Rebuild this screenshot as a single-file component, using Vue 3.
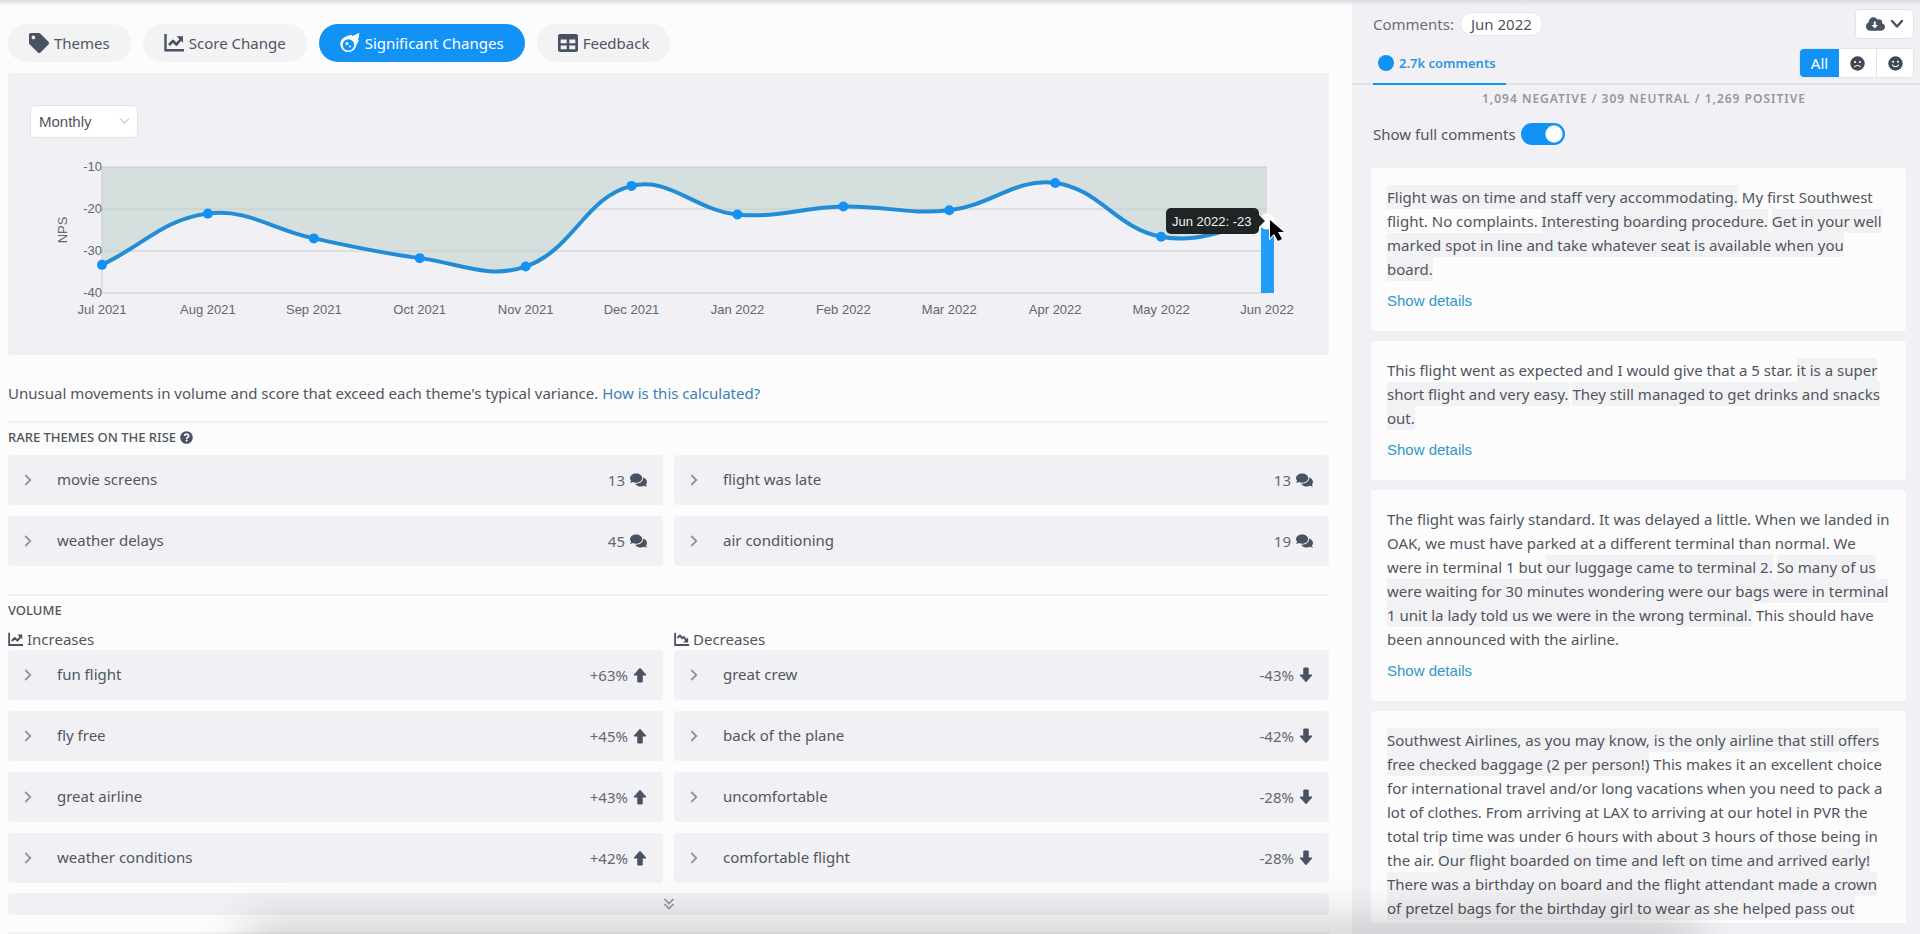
<script setup>
import { h, ref } from 'vue'

const glyphs = {
  tag: ['0 0 512 512', '<path fill="currentColor" d="M0 252V48C0 21 21 0 48 0h204a48 48 0 0 1 34 14l212 212c19 19 19 49 0 68L294 498c-19 19-49 19-68 0L14 286A48 48 0 0 1 0 252zM112 64a48 48 0 1 0 0 96 48 48 0 0 0 0-96z"/>'],
  rise: ['0 0 20 20', '<path fill="none" stroke="currentColor" stroke-width="2.4" d="M1.5 1v16.3H20"/><path fill="none" stroke="currentColor" stroke-width="2.6" stroke-linejoin="round" d="M5 12l4-4 3.5 3.5L17 6"/><path fill="currentColor" d="M12.5 3.2H19v6.5z"/>'],
  fall: ['0 0 20 20', '<path fill="none" stroke="currentColor" stroke-width="2.4" d="M1.5 1v16.3H20"/><path fill="none" stroke="currentColor" stroke-width="2.4" stroke-linejoin="round" d="M4.5 8L8 4.5l3 4 2-2 3.5 5"/><path fill="currentColor" d="M18.8 7v7h-6.5z"/>'],
  meteor: ['0 0 20 20', '<path fill="currentColor" fill-rule="evenodd" d="M19.2 0c.1 2.500-.4 4.600-1.300 6.800l1 .4c-.7 2-1.600 3.700-2.700 5.200a8 8 0 1 1-13.300-7.200C5.800 3.400 9 2.500 11.800 1.800l.1 1.400C14.400 2.100 16.800 1 19.200 0zM8.400 6.200a5.700 5.700 0 1 0 0 11.400 5.700 5.700 0 0 0 0-11.400z"/><circle cx="7" cy="10.600" r="1.600" fill="currentColor"/><circle cx="10" cy="13.600" r="1" fill="currentColor"/>'],
  table: ['0 0 20 20', '<path fill="currentColor" fill-rule="evenodd" d="M2 1h16a2 2 0 0 1 2 2v14a2 2 0 0 1-2 2H2a2 2 0 0 1-2-2V3a2 2 0 0 1 2-2zm.7 5.500v3.700h6V6.500zm8.600 0v3.700h6V6.500zm-8.600 6v3.700h6v-3.700zm8.600 0v3.700h6v-3.700z"/>'],
  help: ['0 0 20 20', '<circle cx="10" cy="10" r="9.700" fill="currentColor"/><path fill="none" stroke="#fff" stroke-width="2.600" d="M6.700 7.700C7.200 5.600 8.500 4.900 10 4.900c2 0 3.300 1.100 3.300 2.600 0 2.300-3.100 2.300-3.100 4.700"/><circle cx="10.100" cy="14.800" r="1.600" fill="#fff"/>'],
  chats: ['0 0 576 512', '<path fill="currentColor" d="M416 192c0-88.400-93.100-160-208-160S0 103.600 0 192c0 34.300 14.100 65.900 38 92-13.400 30.200-35.500 54.200-35.800 54.500-2.200 2.300-2.800 5.700-1.500 8.700S4.800 352 8 352c36.600 0 66.900-12.300 88.700-25 32.200 15.700 70.300 25 111.300 25 114.900 0 208-71.600 208-160zm122 220c23.900-26 38-57.700 38-92 0-66.900-53.500-124.200-129.300-148.100.9 6.600 1.300 13.300 1.300 20.100 0 105.900-107.700 192-240 192-10.800 0-21.300-.8-31.700-1.900C207.800 439.600 281.800 480 368 480c41 0 79.100-9.200 111.300-25 21.800 12.700 52.100 25 88.700 25 3.200 0 6.100-1.900 7.300-4.800 1.300-2.900.7-6.300-1.500-8.700-.3-.3-22.400-24.200-35.800-54.500z"/>'],
  up: ['0 0 14 16', '<path fill="currentColor" stroke="currentColor" stroke-linejoin="round" d="M7 1.200l6 6.800H9.200v7H4.800V8H1z"/>'],
  down: ['0 0 14 16', '<path fill="currentColor" stroke="currentColor" stroke-linejoin="round" d="M7 14.800L13 8H9.200V1H4.800v7H1z"/>'],
  right: ['0 0 8 12', '<path fill="none" stroke="currentColor" stroke-width="1.800" d="M1.300 1l5 5-5 5"/>'],
  chevron: ['0 0 14 10', '<path fill="none" stroke="currentColor" stroke-width="2.400" stroke-linecap="round" stroke-linejoin="round" d="M2 2l5 5.500L12 2"/>'],
  thin: ['0 0 12 8', '<path fill="none" stroke="currentColor" stroke-width="1" d="M1 1l5 5.500L11 1"/>'],
  more: ['0 0 12 12', '<path fill="none" stroke="currentColor" stroke-width="1.700" d="M1.500 1L6 5.500 10.500 1M1.500 6L6 10.500 10.500 6"/>'],
  cloud: ['0 0 640 512', '<path fill="currentColor" d="M537.600 226.600c4.100-10.700 6.400-22.400 6.400-34.600 0-53-43-96-96-96-19.700 0-38.100 6-53.300 16.200C367 64.200 315.300 32 256 32c-88.400 0-160 71.600-160 160 0 2.700.1 5.400.2 8.100C40.200 219.800 0 273.200 0 336c0 79.500 64.500 144 144 144h368c70.700 0 128-57.300 128-128 0-61.900-44-113.600-102.400-125.400z"/><path fill="#fff" d="M264 170h64v120h76L296 410 188 290h76z"/>'],
  sad: ['0 0 16 16', '<circle cx="8" cy="8" r="7.700" fill="currentColor"/><circle cx="5.400" cy="6.400" r="1.100" fill="#fff"/><circle cx="10.600" cy="6.400" r="1.100" fill="#fff"/><path fill="none" stroke="#fff" stroke-width="1.100" stroke-linecap="round" d="M4.900 11.500c1.500-1.900 4.700-1.900 6.200 0"/>'],
  happy: ['0 0 16 16', '<circle cx="8" cy="8" r="7.700" fill="currentColor"/><circle cx="5.400" cy="6.200" r="1.100" fill="#fff"/><circle cx="10.600" cy="6.200" r="1.100" fill="#fff"/><path fill="none" stroke="#fff" stroke-width="1.100" stroke-linecap="round" d="M4.700 9.600c1.500 2.300 5.100 2.300 6.600 0"/>'],
}
const Icon = (props) =>
  h('svg', { viewBox: glyphs[props.name][0], innerHTML: glyphs[props.name][1], 'aria-hidden': 'true' })
Icon.props = ['name']

const tabs = [
  { label: 'Themes', icon: 'tag' },
  { label: 'Score Change', icon: 'rise' },
  { label: 'Significant Changes', icon: 'meteor' },
  { label: 'Feedback', icon: 'table' },
]
const activeTab = ref('Significant Changes')
const period = ref('Monthly')
const showFull = ref(true)

const months = ['Jul 2021', 'Aug 2021', 'Sep 2021', 'Oct 2021', 'Nov 2021', 'Dec 2021', 'Jan 2022', 'Feb 2022', 'Mar 2022', 'Apr 2022', 'May 2022', 'Jun 2022']
const scores = [-33.3, -21.1, -27, -31.7, -33.7, -14.5, -21.3, -19.4, -20.3, -13.8, -26.6, -23]
const plot = { left: 94, right: 1259, top: 16, bottom: 142 }
const xAt = (i) => plot.left + ((plot.right - plot.left) * i) / (months.length - 1)
const yAt = (v) => plot.top + ((-10 - v) / 30) * (plot.bottom - plot.top)
const points = scores.map((v, i) => ({ x: xAt(i), y: yAt(v), label: months[i] }))
const ticks = [-10, -20, -30, -40]

// Smooths the series with control points weighted by neighbour distance.
function spline(pts, tension) {
  const ctl = pts.map((c, i) => {
    const p = pts[i - 1] || c
    const n = pts[i + 1] || c
    const a = Math.hypot(c.x - p.x, c.y - p.y)
    const b = Math.hypot(n.x - c.x, n.y - c.y)
    const fa = (tension * a) / (a + b)
    const fb = (tension * b) / (a + b)
    return {
      before: [c.x - fa * (n.x - p.x), c.y - fa * (n.y - p.y)],
      after: [c.x + fb * (n.x - p.x), c.y + fb * (n.y - p.y)],
    }
  })
  return pts.slice(1).reduce(
    (d, c, i) => `${d} C${ctl[i].after} ${ctl[i + 1].before} ${c.x},${c.y}`,
    `M${pts[0].x},${pts[0].y}`,
  )
}
const line = spline(points, 0.4)
const area = `${line} V${plot.top} H${plot.left} Z`
const last = points[points.length - 1]

const rare = [
  { name: 'movie screens', value: '13' },
  { name: 'flight was late', value: '13' },
  { name: 'weather delays', value: '45' },
  { name: 'air conditioning', value: '19' },
]
const volume = [
  {
    title: 'Increases', icon: 'rise', arrow: 'up',
    rows: [['fun flight', '+63%'], ['fly free', '+45%'], ['great airline', '+43%'], ['weather conditions', '+42%']],
  },
  {
    title: 'Decreases', icon: 'fall', arrow: 'down',
    rows: [['great crew', '-43%'], ['back of the plane', '-42%'], ['uncomfortable', '-28%'], ['comfortable flight', '-28%']],
  },
]

const comments = [
  {
    details: true,
    parts: [
      ['Flight was on time and staff very accommodating.', true],
      ['My first Southwest flight. No complaints.', false],
      ['Interesting boarding procedure.', true],
      ['Get in your well marked spot in line and take whatever seat is available when you board.', true],
    ],
  },
  {
    details: true,
    parts: [
      ['This flight went as expected and I would give that a 5 star.', false],
      ['it is a super short flight and very easy.', true],
      ['They still managed to get drinks and snacks out.', true],
    ],
  },
  {
    details: true,
    parts: [
      ['The flight was fairly standard. It was delayed a little. When we landed in OAK, we must have parked at a different terminal than normal. We were in terminal 1 but', false],
      ['our luggage came to terminal 2.', true],
      ['So many of us were waiting for 30 minutes wondering were our bags were in terminal 1 unit la lady told us we were in the wrong terminal.', true],
      ['This should have been announced with the airline.', false],
    ],
  },
  {
    details: false,
    parts: [
      ['Southwest Airlines, as you may know, is the only airline that still offers free checked baggage (2 per person!)', true],
      ['This makes it an excellent choice for international travel and/or long vacations when you need to pack a lot of clothes. From arriving at LAX to arriving at our hotel in PVR the total trip time was under 6 hours with about 3 hours of those being in the air.', false],
      ['Our flight boarded on time and left on time and arrived early! There was a birthday on board and the flight attendant made a crown of pretzel bags for the birthday girl to wear as she helped pass out', true],
    ],
  },
]
</script>

<template>
  <div class="app">
    <main class="main">
      <nav class="tabs" aria-label="Report sections">
        <button
          v-for="t in tabs" :key="t.label" type="button" class="tab"
          :class="{ active: t.label === activeTab }" @click="activeTab = t.label"
        >
          <Icon :name="t.icon" class="tab-icon" />{{ t.label }}
        </button>
      </nav>

      <section class="chart-panel">
        <div class="period">
          <select v-model="period" aria-label="Period">
            <option>Monthly</option>
            <option>Weekly</option>
          </select>
          <Icon name="thin" class="period-icon" />
        </div>
        <svg class="chart" viewBox="0 0 1321 180" role="img" aria-label="NPS by month">
          <path class="area" :d="area" />
          <line v-for="t in ticks" :key="t" class="grid" :x1="plot.left" :x2="plot.right" :y1="yAt(t)" :y2="yAt(t)" />
          <line class="grid" :x1="plot.left" :x2="plot.left" :y1="plot.top" :y2="plot.bottom" />
          <text v-for="t in ticks" :key="'t' + t" class="axis" text-anchor="end" :x="plot.left" :y="yAt(t) + 4">{{ t }}</text>
          <text class="axis" text-anchor="middle" transform="translate(59 79) rotate(-90)">NPS</text>
          <rect class="bar" :x="last.x - 6" :y="last.y" width="13" :height="plot.bottom - last.y" />
          <path class="line" :d="line" />
          <circle v-for="p in points.slice(0, -1)" :key="p.label" class="dot" :cx="p.x" :cy="p.y" r="5" />
          <text v-for="p in points" :key="'m' + p.label" class="axis" text-anchor="middle" :x="p.x" y="163">{{ p.label }}</text>
          <circle class="halo" :cx="last.x" :cy="last.y" r="8" />
          <rect class="tip" x="1158" y="57" width="93" height="26" rx="5" />
          <path class="tip" d="M1251 64l6 6-6 6z" />
          <text class="tip-text" x="1164" y="75">Jun 2022: -23</text>
          <path class="cursor" d="M1262 69v18l4-4 4 7 4-2-4-7h6z" />
        </svg>
      </section>

      <p class="intro">
        Unusual movements in volume and score that exceed each theme's typical variance.
        <a href="#calculation">How is this calculated?</a>
      </p>

      <section class="group rare">
        <h2>RARE THEMES ON THE RISE <Icon name="help" class="help" /></h2>
        <div class="grid-two">
          <button v-for="r in rare" :key="r.name" type="button" class="row">
            <Icon name="right" class="expand" /><span class="name">{{ r.name }}</span>
            <span class="value">{{ r.value }}</span><Icon name="chats" class="chats" />
          </button>
        </div>
      </section>

      <section class="group volume">
        <h2>VOLUME</h2>
        <div class="grid-two">
          <div v-for="v in volume" :key="v.title" class="column">
            <h3><Icon :name="v.icon" class="trend" />{{ v.title }}</h3>
            <button v-for="r in v.rows" :key="r[0]" type="button" class="row">
              <Icon name="right" class="expand" /><span class="name">{{ r[0] }}</span>
              <span class="value">{{ r[1] }}</span><Icon :name="v.arrow" class="arrow" />
            </button>
          </div>
        </div>
        <button type="button" class="more" aria-label="Show more"><Icon name="more" class="more-icon" /></button>
      </section>
      <section class="group next"></section>
    </main>

    <aside class="side">
      <header class="side-top">
        <span class="side-label">Comments:</span>
        <span class="pill">Jun 2022</span>
        <button type="button" class="download" aria-label="Download comments">
          <Icon name="cloud" class="cloud" /><Icon name="chevron" class="chevron" />
        </button>
      </header>
      <div class="side-tabs">
        <button type="button" class="count"><span class="count-dot"></span>2.7k comments</button>
        <div class="filter">
          <button type="button" class="on">All</button>
          <button type="button" aria-label="Negative"><Icon name="sad" class="face" /></button>
          <button type="button" aria-label="Positive"><Icon name="happy" class="face" /></button>
        </div>
      </div>
      <p class="stats">1,094 NEGATIVE / 309 NEUTRAL / 1,269 POSITIVE</p>
      <div class="full">
        <label for="full-comments">Show full comments</label>
        <input id="full-comments" v-model="showFull" type="checkbox" role="switch" />
      </div>
      <div class="list">
        <article v-for="(c, i) in comments" :key="i" class="comment">
          <p><template v-for="(s, j) in c.parts" :key="j"><span :class="{ mark: s[1] }">{{ s[0] }}</span>{{ ' ' }}</template></p>
          <a v-if="c.details" href="#details">Show details</a>
        </article>
      </div>
    </aside>
  </div>
</template>

<style>
body {
  overflow: hidden;
}
</style>

<style scoped>
.app {
  position: relative;
  display: flex;
  height: 100vh;
  overflow: hidden;
  background: #fcfcfc;
  color: #50555d;
  font-family: "Noto Sans", "Open Sans", sans-serif;
  font-size: 15px;
}
.app::before {
  content: "";
  position: absolute;
  inset: 0 0 auto;
  height: 6px;
  background: linear-gradient(#dcdce1, rgba(240, 240, 243, 0));
}
.app::after {
  content: "";
  position: absolute;
  top: 100%;
  left: 13%;
  right: 12%;
  height: 20px;
  box-shadow: 0 0 50px 4px rgba(0, 0, 0, 0.3);
  pointer-events: none;
}
button {
  font: inherit;
  color: inherit;
  border: 0;
  cursor: pointer;
}
a {
  text-decoration: none;
}
.main {
  flex: 1;
  min-width: 0;
  padding: 24px 23px 0 8px;
}
.tabs {
  display: flex;
  gap: 12px;
}
.tab {
  display: flex;
  align-items: center;
  gap: 5px;
  height: 38px;
  padding: 0 21px;
  border-radius: 19px;
  background: #f3f3f6;
}
.tab.active {
  background: #1292f5;
  color: #fff;
}
.tab-icon {
  width: 20px;
  height: 20px;
  color: #485262;
}
.active .tab-icon {
  color: #fff;
}
.chart-panel {
  margin-top: 11px;
  padding: 32px 0 24px;
  background: #f1f1f5;
  border-radius: 2px;
}
.period {
  position: relative;
  width: 108px;
  margin-left: 22px;
}
.period select {
  display: block;
  width: 100%;
  height: 33px;
  padding: 0 8px;
  appearance: none;
  border: 1px solid #e3e4e8;
  border-radius: 5px;
  background: #fff;
  color: #50555d;
  font: 15px "Liberation Sans", sans-serif;
}
.period-icon {
  position: absolute;
  top: 12px;
  right: 8px;
  width: 11px;
  height: 8px;
  color: #a8abb0;
  pointer-events: none;
}
.chart {
  display: block;
  width: 100%;
  margin-top: 13px;
}
.area {
  fill: #d5e0de;
}
.grid {
  stroke: #c6cccf;
  stroke-width: 1;
}
.axis {
  fill: #63666b;
  font: 13px "Liberation Sans", sans-serif;
}
.line {
  fill: none;
  stroke: #238cd7;
  stroke-width: 4;
}
.dot {
  fill: #1292f5;
}
.bar {
  fill: #219ff8;
}
.halo {
  fill: #fff;
}
.tip {
  fill: #1f2424;
}
.tip-text {
  fill: #f2f2f2;
  font: 13px "Liberation Sans", sans-serif;
}
.cursor {
  fill: #000;
  stroke: #fff;
  stroke-width: 2;
  paint-order: stroke;
}
.intro {
  margin: 26px 0 16px;
  line-height: 24px;
}
.intro a {
  color: #3f80b2;
}
.group {
  border-top: 2px solid #f0f0f2;
}
h2 {
  display: flex;
  align-items: center;
  gap: 4px;
  box-sizing: border-box;
  height: 32px;
  margin: 0;
  padding-bottom: 4px;
  font-size: 13px;
  font-weight: 500;
}
.help {
  width: 13px;
  height: 13px;
  color: #485262;
}
.grid-two {
  display: grid;
  grid-template-columns: 1fr 1fr;
  gap: 11px;
}
.row {
  display: flex;
  align-items: center;
  width: 100%;
  height: 50px;
  padding: 0 16px;
  border-radius: 4px;
  background: #f1f1f5;
  text-align: left;
}
.expand {
  width: 8px;
  height: 12px;
  margin-right: 25px;
  color: #92959b;
}
.name {
  flex: 1;
  padding-bottom: 2px;
}
.value {
  margin-right: 5px;
  color: #646870;
}
.chats {
  width: 17px;
  height: 16px;
  color: #485262;
}
.arrow {
  width: 14px;
  height: 16px;
  color: #485262;
}
.volume {
  margin-top: 28px;
}
.column {
  display: flex;
  flex-direction: column;
  gap: 11px;
}
h3 {
  display: flex;
  align-items: center;
  gap: 4px;
  height: 22px;
  margin: 0 0 -11px;
  font-size: 15px;
  font-weight: 400;
}
.trend {
  width: 15px;
  height: 15px;
  color: #485262;
}
.more {
  display: flex;
  align-items: center;
  justify-content: center;
  width: 100%;
  height: 22px;
  margin-top: 10px;
  border-radius: 4px;
  background: #f1f1f5;
}
.more-icon {
  width: 12px;
  height: 12px;
  color: #92959b;
}
.next {
  margin-top: 17px;
}
.side {
  display: flex;
  flex-direction: column;
  flex: 0 0 568px;
  box-sizing: border-box;
  padding-bottom: 11px;
  background: #f1f1f5;
}
.side-top {
  display: flex;
  align-items: center;
  gap: 6px;
  height: 48px;
  padding: 0 6px 0 21px;
}
.side-label {
  color: #6b6f76;
}
.pill {
  padding: 0 10px;
  border: 1px solid #e3e4e8;
  border-radius: 12px;
  background: #fff;
  line-height: 22px;
}
.download {
  display: flex;
  align-items: center;
  justify-content: center;
  gap: 5px;
  width: 59px;
  height: 30px;
  margin-left: auto;
  padding: 0;
  border: 1px solid #e3e4e8;
  border-radius: 4px;
  background: #fff;
  color: #485262;
}
.cloud {
  width: 19px;
  height: 16px;
}
.chevron {
  width: 14px;
  height: 10px;
}
.side-tabs {
  display: flex;
  align-items: flex-start;
  justify-content: space-between;
  height: 35px;
  padding: 0 6px 0 21px;
  border-bottom: 2px solid #e0e1e5;
}
.count {
  display: flex;
  align-items: center;
  gap: 5px;
  height: 37px;
  padding: 0 10px 6px 5px;
  border-bottom: 2px solid #1292f5;
  background: none;
  color: #3296d6;
  font-size: 13px;
  font-weight: 600;
}
.count-dot {
  width: 16px;
  height: 16px;
  border-radius: 50%;
  background: #1292f5;
}
.filter {
  display: flex;
  height: 30px;
  box-sizing: border-box;
  border: 1px solid #e3e4e8;
  border-radius: 5px;
  background: #fff;
  overflow: hidden;
}
.filter button {
  display: flex;
  align-items: center;
  justify-content: center;
  width: 37px;
  padding: 0;
  background: #fff;
  color: #414957;
}
.filter button + button + button {
  border-left: 1px solid #e3e4e8;
}
.filter .on {
  width: 39px;
  background: #1292f5;
  color: #fff;
}
.face {
  width: 15px;
  height: 15px;
}
.stats {
  margin: 5px 0 0 16px;
  color: #94979d;
  font-size: 12px;
  font-weight: 600;
  letter-spacing: 1px;
  line-height: 18px;
  text-align: center;
}
.full {
  display: flex;
  align-items: center;
  gap: 5px;
  margin: 14px 0 22px;
  padding-left: 21px;
  height: 24px;
}
.full input {
  width: 44px;
  height: 22px;
  margin: 0;
  appearance: none;
  border-radius: 11px;
  background: radial-gradient(circle at 33px 11px, #fff 8px, #1292f5 9px);
}
.full input:not(:checked) {
  background: radial-gradient(circle at 11px 11px, #fff 8px, #a9adb5 9px);
}
.list {
  flex: 1;
  min-height: 0;
  overflow: hidden;
  padding: 0 14px 0 19px;
}
.comment {
  margin-bottom: 10px;
  padding: 17px 16px 19px;
  border-radius: 4px;
  background: #fcfcfd;
}
.comment p {
  margin: 0 0 9px;
  line-height: 24px;
}
.mark {
  padding: 2px 0;
  background: #f2f2f5;
}
.comment a {
  display: block;
  color: #2f98c8;
  font: 15px/22px "Liberation Sans", sans-serif;
}
</style>
